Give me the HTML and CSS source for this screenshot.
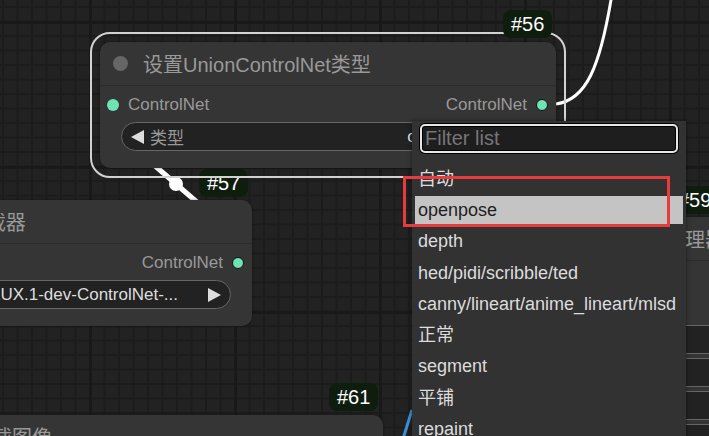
FILE: index.html
```html
<!DOCTYPE html>
<html lang="zh-CN">
<head>
<meta charset="utf-8">
<title>ControlNet 工作流</title>
<link rel="stylesheet" href="styles.css">
</head>
<body>
<div class="canvas">
  <!-- links between node slots -->
  <svg class="links" width="709" height="436" viewBox="0 0 709 436">
    <path d="M556 104 C 586 100, 600 68, 612 -6" stroke="#fff" stroke-width="3" fill="none"/>
    <line x1="154" y1="165" x2="198" y2="203" stroke="#fff" stroke-width="5"/>
    <circle cx="176" cy="184" r="7" fill="#fff"/>
    <line x1="412" y1="410" x2="402" y2="442" stroke="#3f8fd6" stroke-width="3"/>
  </svg>

  <!-- ControlNet loader -->
  <div class="badge b57">#57</div>
  <div class="node n57">
    <div class="node-title"><span class="title-dot"></span><span class="title-text">UnionControlNet加载器</span></div>
    <div class="node-body">
      <div class="slot-row">
        <span class="slot in"></span>
        <span class="slot out">ControlNet<i class="dot"></i></span>
      </div>
      <div class="widget">
        <svg class="arrow" width="13" height="14" viewBox="0 0 13 14"><polygon points="13,0 13,14 0,7" fill="#ddd"/></svg>
        <span class="w-label">control_net_name</span>
        <span class="w-value">FLUX.1-dev-ControlNet-...</span>
        <svg class="arrow right" width="13" height="14" viewBox="0 0 13 14"><polygon points="0,0 0,14 13,7" fill="#ddd"/></svg>
      </div>
    </div>
  </div>

  <!-- Load image -->
  <div class="badge b61">#61</div>
  <div class="node n61">
    <div class="node-title"><span class="title-dot"></span><span class="title-text">加载图像</span></div>
  </div>

  <!-- Preprocessor -->
  <div class="badge b59">#59</div>
  <div class="node n59">
    <div class="node-title"><span class="title-dot"></span><span class="title-text">预处理器</span></div>
    <div class="node-body">
      <div class="slot-row"></div>
      <div class="slot-row"></div>
      <div class="widget plain"></div>
      <div class="widget plain"></div>
      <div class="widget plain"></div>
      <div class="widget plain"></div>
    </div>
  </div>

  <!-- Set union ControlNet type (selected) -->
  <div class="node n56">
    <div class="node-title"><span class="title-dot"></span><span class="title-text">设置UnionControlNet类型</span></div>
    <div class="node-body">
      <div class="slot-row">
        <span class="slot in"><i class="dot"></i>ControlNet</span>
        <span class="slot out">ControlNet<i class="dot"></i></span>
      </div>
      <div class="widget">
        <svg class="arrow" width="13" height="14" viewBox="0 0 13 14"><polygon points="13,0 13,14 0,7" fill="#ddd"/></svg>
        <span class="w-label">类型</span>
        <span class="w-value">openpose</span>
        <svg class="arrow right" width="13" height="14" viewBox="0 0 13 14"><polygon points="0,0 0,14 13,7" fill="#ddd"/></svg>
      </div>
    </div>
  </div>
  <div class="selection"></div>
  <div class="badge b56">#56</div>

  <!-- combo menu -->
  <div class="menu">
    <div class="filter">Filter list</div>
    <ul class="options">
      <li>自动</li>
      <li class="active">openpose</li>
      <li>depth</li>
      <li>hed/pidi/scribble/ted</li>
      <li>canny/lineart/anime_lineart/mlsd</li>
      <li>正常</li>
      <li>segment</li>
      <li>平铺</li>
      <li>repaint</li>
    </ul>
  </div>
  <div class="highlight-box"></div>
</div>
</body>
</html>
```

FILE: styles.css
```css
* { box-sizing: border-box; }

html, body {
  margin: 0;
  padding: 0;
  background: #222;
}

.canvas {
  position: relative;
  width: 709px;
  height: 436px;
  overflow: hidden;
  font-family: "Liberation Sans", "Noto Sans CJK SC", sans-serif;
  background-color: #222;
  background-image:
    linear-gradient(to right, #191919 3px, transparent 3px),
    linear-gradient(to bottom, #191919 3px, transparent 3px),
    linear-gradient(to right, #1c1c1c 2px, transparent 2px),
    linear-gradient(to bottom, #1c1c1c 2px, transparent 2px);
  background-size: 145px 145px, 145px 145px, 14.5px 14.5px, 14.5px 14.5px;
  background-position: 89px 0, 0 21px, 2px 0, 0 6px;
}

.links {
  position: absolute;
  left: 0;
  top: 0;
}

/* ---------- nodes ---------- */
.node {
  position: absolute;
  background: #353535;
  border-radius: 10px;
  box-shadow: 0 0 3px rgba(0, 0, 0, 0.45);
  color: #999;
}

.node-title {
  display: flex;
  align-items: center;
  height: 44px;
  padding-left: 13px;
  border-bottom: 1px solid #2b2b2b;
  font-size: 20px;
  white-space: nowrap;
}

.title-dot {
  width: 15px;
  height: 15px;
  border-radius: 50%;
  background: #666;
  margin-right: 15px;
  flex: none;
}

.node-body {
  padding-top: 4px;
}

.slot-row {
  display: flex;
  justify-content: space-between;
  align-items: center;
  height: 30px;
  padding: 0 8px 0 7px;
  font-size: 17px;
  white-space: nowrap;
}

.slot {
  display: flex;
  align-items: center;
}

.dot {
  display: block;
  width: 12px;
  height: 12px;
  border-radius: 50%;
  background: #6ee3b4;
}

.slot.in .dot { margin-right: 9px; }
.slot.out .dot { margin-left: 9px; border: 1px solid #111; }

.widget {
  display: flex;
  align-items: center;
  height: 29px;
  margin: 2px 21px 0;
  padding: 0 9px;
  background: #222;
  border: 1px solid #666;
  border-radius: 15px;
  font-size: 17px;
  white-space: nowrap;
  overflow: hidden;
}

.widget .arrow { flex: none; }
.widget .arrow.right { margin-left: 30px; }
.w-label { margin-left: 6px; color: #999; }
.w-value { margin-left: auto; color: #ddd; }

.widget.plain { margin-top: 4px; }

.n56 { left: 100px; top: 42px; width: 456px; height: 126px; }
.n57 { left: -225px; top: 200px; width: 477px; height: 126px; }
.n61 { left: -71px; top: 415px; width: 454px; height: 120px; }
.n59 { left: 602px; top: 217px; width: 300px; height: 260px; }

.n59 .slot-row + .widget { margin-top: 0; }

.selection {
  position: absolute;
  left: 90px;
  top: 32px;
  width: 476px;
  height: 146px;
  border: 2px solid #d2d2d2;
  border-radius: 20px;
}

/* ---------- id badges ---------- */
.badge {
  position: absolute;
  height: 28px;
  padding: 0 8px;
  line-height: 28px;
  border-radius: 8px;
  background: #0f1d0f;
  color: #fff;
  font-size: 20px;
}

.b56 { left: 503px; top: 10px; }
.b57 { left: 199px; top: 169px; }
.b61 { left: 329px; top: 383px; }
.b59 { left: 670px; top: 186px; }

/* ---------- combo menu ---------- */
.menu {
  position: absolute;
  left: 412px;
  top: 121px;
  width: 274px;
  height: 330px;
  padding: 3px;
  background: #323232;
  box-shadow: 0 0 4px rgba(0, 0, 0, 0.5);
}

.filter {
  width: 258px;
  height: 29px;
  margin-left: 5px;
  padding-left: 3px;
  border: 2px solid #e6e6e6;
  border-radius: 5px;
  background: #1e1e1e;
  box-shadow: 0 0 0 1px #000, inset 0 0 0 1px #000;
  color: #767676;
  font-size: 20px;
  line-height: 25px;
}

.options {
  list-style: none;
  margin: 11.75px 0 0;
  padding: 0;
}

.options li {
  height: 28px;
  line-height: 28px;
  margin-bottom: 3.25px;
  padding-left: 3px;
  color: #dcdcdc;
  font-size: 18px;
  white-space: nowrap;
}

.options li.active {
  background: #c4c4c4;
  color: #1e1e1e;
}

.highlight-box {
  position: absolute;
  left: 403px;
  top: 176px;
  width: 267px;
  height: 51px;
  border: 3px solid #e83b3b;
}
```
